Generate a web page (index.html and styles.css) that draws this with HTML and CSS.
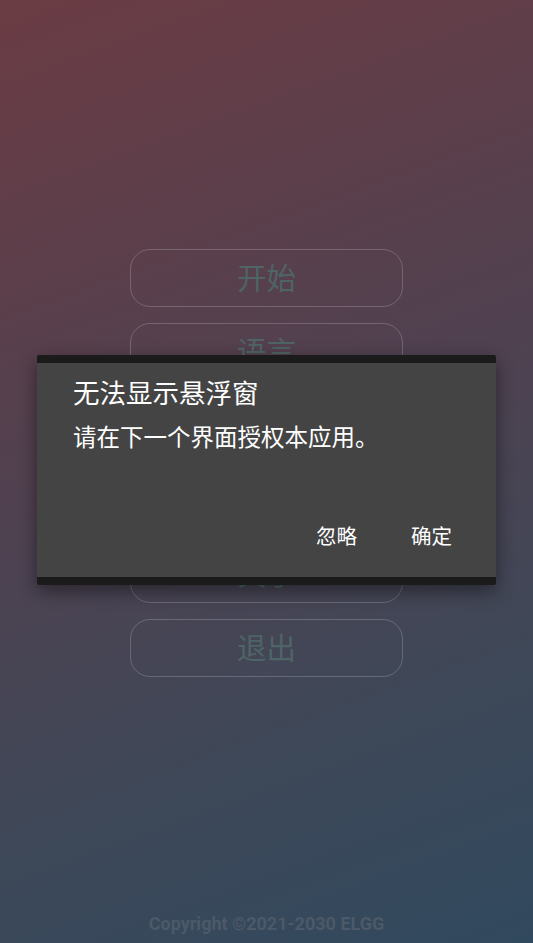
FILE: index.html
```html
<!DOCTYPE html>
<html lang="zh">
<head>
<meta charset="utf-8">
<title>ELGG</title>
<link rel="stylesheet" href="styles.css">
</head>
<body>
<div class="screen">
  <main class="menu">
    <div class="menu-btn">开始</div>
    <div class="menu-btn">语言</div>
    <div class="menu-btn">设置</div>
    <div class="menu-btn">帮助</div>
    <div class="menu-btn">关于</div>
    <div class="menu-btn">退出</div>
  </main>
  <footer class="copyright">Copyright ©2021-2030 ELGG</footer>
  <div class="dialog">
    <div class="dialog-bar"></div>
    <div class="dialog-body">
      <h1 class="dialog-title">无法显示悬浮窗</h1>
      <p class="dialog-msg">请在下一个界面授权本应用。</p>
      <div class="dialog-actions">
        <span class="dialog-btn">忽略</span>
        <span class="dialog-btn">确定</span>
      </div>
    </div>
    <div class="dialog-bar"></div>
  </div>
</div>
</body>
</html>
```
FILE: styles.css
```css
html, body {
  margin: 0;
  padding: 0;
}
body {
  font-family: "Noto Sans CJK SC", "Noto Sans", Roboto, sans-serif;
}
.screen {
  position: relative;
  width: 533px;
  height: 943px;
  overflow: hidden;
  background: linear-gradient(160deg, #6b3c44 0%, #504150 45%, #3e4858 75%, #31495e 100%);
  display: flex;
  flex-direction: column;
  align-items: center;
}
.menu {
  margin-top: 249px;
  display: flex;
  flex-direction: column;
  gap: 16px;
}
.menu-btn {
  width: 271px;
  height: 56px;
  border: 1px solid rgba(175, 170, 180, 0.35);
  border-radius: 20px;
  display: flex;
  align-items: center;
  justify-content: center;
  font-size: 29.5px;
  color: #4e6466;
  line-height: 1;
  padding-bottom: 2px;
  box-sizing: content-box;
  height: 54px;
}
.copyright {
  margin-top: auto;
  margin-bottom: 9px;
  font-family: Roboto, "Noto Sans", sans-serif;
  font-weight: bold;
  font-size: 18px;
  color: #4c5968;
}
.dialog {
  position: absolute;
  left: 37px;
  top: 355px;
  width: 459px;
  height: 230px;
  display: flex;
  flex-direction: column;
  border-radius: 2px;
  overflow: hidden;
  box-shadow: 0 6px 18px rgba(0, 0, 0, 0.45);
}
.dialog-bar {
  height: 8px;
  background: #1b1b1b;
}
.dialog-body {
  flex: 1;
  background: #444444;
  padding: 11px 36px 0 36px;
  display: flex;
  flex-direction: column;
}
.dialog-title {
  margin: 0;
  font-size: 26.5px;
  font-weight: normal;
  line-height: 36px;
  color: #ffffff;
}
.dialog-msg {
  margin: 10px 0 0 0;
  font-size: 23.5px;
  line-height: 32px;
  color: #ffffff;
}
.dialog-actions {
  margin-top: auto;
  margin-bottom: 28px;
  display: flex;
  justify-content: flex-end;
  gap: 54px;
  margin-right: 8px;
}
.dialog-btn {
  font-size: 20.5px;
  line-height: 28px;
  color: #ffffff;
}
```
